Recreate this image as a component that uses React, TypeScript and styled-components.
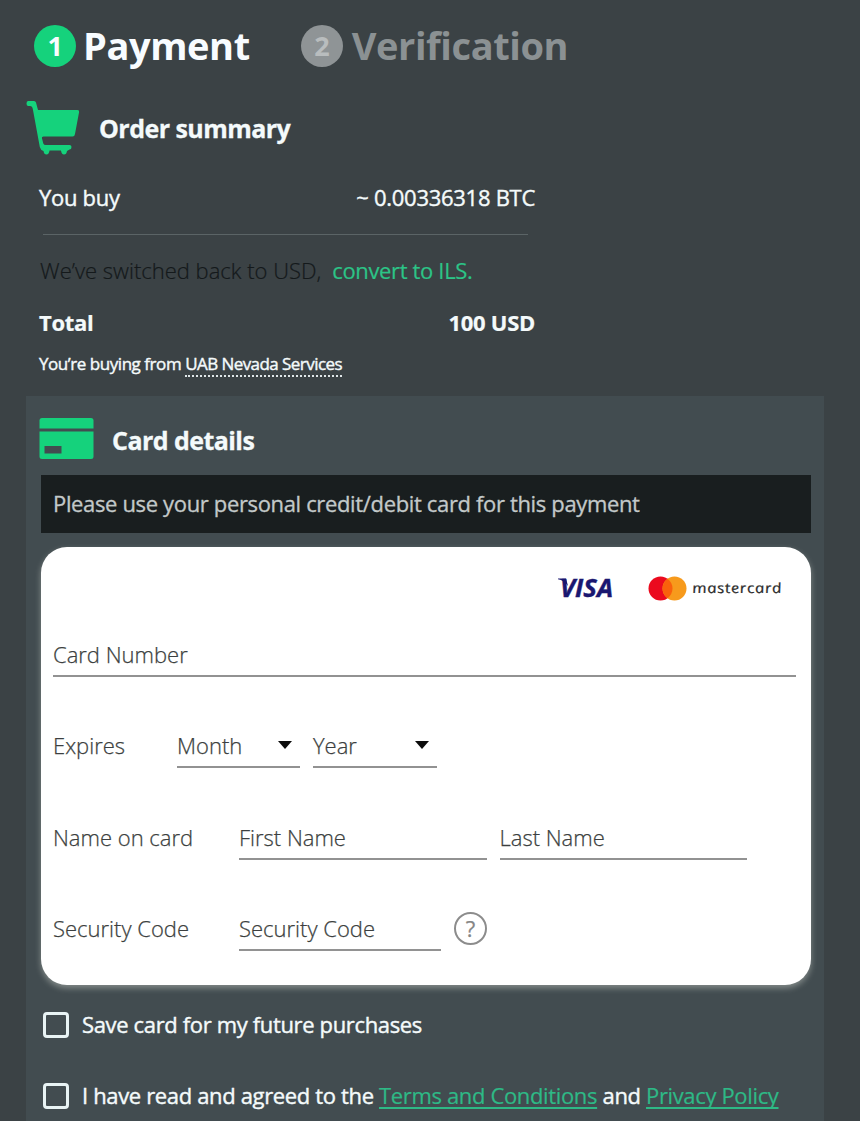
import React from "react";
import styled, { createGlobalStyle } from "styled-components";

const GlobalStyle = createGlobalStyle`
  * { box-sizing: border-box; }
  body {
    margin: 0;
    background: #3b4245;
    font-family: "Open Sans", sans-serif;
    font-size: 22px;
    line-height: 30px;
    color: #f4fafb;
    white-space: nowrap;
  }
`;

const Page = styled.main`
  width: 860px;
  height: 1121px;
  overflow: hidden;
  padding-top: 25px;
`;

const Steps = styled.nav`
  display: flex;
  gap: 51px;
  padding-left: 34px;
`;

const Step = styled.div<{ $active?: boolean }>`
  display: flex;
  align-items: center;
  gap: ${(p) => (p.$active ? 7 : 9)}px;
  height: 42px;
  font-size: 38px;
  line-height: 40px;
  font-weight: 700;
  letter-spacing: -0.42px;
  color: ${(p) => (p.$active ? "#f8fcff" : "#8b9193")};
`;

const StepTitle = styled.span`
  padding-bottom: 2px;
`;

const StepNumber = styled.span<{ $active?: boolean }>`
  display: flex;
  align-items: center;
  justify-content: center;
  flex: none;
  width: 42px;
  height: 42px;
  border-radius: 50%;
  font-size: 27px;
  background: ${(p) => (p.$active ? "#15d27c" : "#8f9496")};
  color: ${(p) => (p.$active ? "#f8fcff" : "#b9bdbe")};
`;

const Heading = styled.h2<{ $gap: number }>`
  display: flex;
  align-items: center;
  gap: ${(p) => p.$gap}px;
  margin: 0;
  font-size: 25px;
  font-weight: 700;
  letter-spacing: -0.55px;
  -webkit-text-stroke: 0.3px currentColor;
  svg { display: block; flex: none; }
`;

const Summary = styled.section`
  height: 329px;
  padding: 34px 0 0 26px;
`;

const SummaryBody = styled.div`
  width: 496px;
  margin: 27px 0 0 13px;
`;

const SummaryRow = styled.div<{ $bold?: boolean }>`
  display: flex;
  justify-content: space-between;
  height: 30px;
  letter-spacing: -0.28px;
  font-weight: ${(p) => (p.$bold ? 700 : 400)};
  -webkit-text-stroke: ${(p) => (p.$bold ? 0.2 : 0.4)}px currentColor;
`;

const Divider = styled.hr`
  width: 485px;
  height: 1px;
  margin: 22px 0 20px 4px;
  border: 0;
  background: #5b6466;
`;

const CurrencyNote = styled.p`
  margin: 0 0 22px;
  text-indent: 1px;
  font-weight: 300;
  color: #14191b;
  -webkit-text-stroke: 0.2px currentColor;
`;

const ConvertLink = styled.a`
  margin-left: 11px;
  font-weight: 400;
  letter-spacing: -0.35px;
  color: #2cc487;
`;

const Seller = styled.p`
  margin: 15px 0 0;
  font-size: 17px;
  line-height: 24px;
  letter-spacing: -0.45px;
  -webkit-text-stroke: 0.4px currentColor;
`;

const SellerName = styled.span`
  display: inline-block;
  height: 25px;
  border-bottom: 2px dotted #dfe6e8;
  letter-spacing: -0.56px;
`;

const Panel = styled.section`
  width: 798px;
  height: 725px;
  margin-left: 26px;
  padding: 22px 13px 0;
  background: #424c50;
`;

const PanelTitle = styled.span`
  padding-top: 2px;
`;

const Notice = styled.p`
  margin: 15px 0 14px 2px;
  width: 770px;
  height: 58px;
  padding-left: 12px;
  line-height: 57px;
  letter-spacing: -0.35px;
  background: #191e1f;
  color: #c3c9c9;
  -webkit-text-stroke: 0.3px currentColor;
`;

const CardForm = styled.form`
  width: 770px;
  height: 438px;
  margin-left: 1.5px;
  padding: 28px 14px 0 12.5px;
  border-radius: 26px;
  background: #fff;
  box-shadow: 0 3px 6px rgba(215, 220, 210, 0.45);
  color: #3c3f40;
  font-weight: 300;
  -webkit-text-stroke: 0.25px currentColor;
`;

const Brands = styled.div`
  display: flex;
  justify-content: flex-end;
  align-items: center;
  gap: 34px;
  height: 26px;
  margin: 0 14px 37.5px 0;
  -webkit-text-stroke: 0;
  svg { overflow: visible; }
`;

const FormRow = styled.div`
  display: flex;
  align-items: flex-start;
  height: 91.6px;
`;

const Label = styled.label<{ $width: number }>`
  width: ${(p) => p.$width}px;
`;

const Field = styled.div<{ $width: number }>`
  display: flex;
  flex: none;
  justify-content: space-between;
  width: ${(p) => p.$width}px;
  height: 38px;
  margin-right: 13px;
  padding-right: 8px;
  border-bottom: 2px solid #929292;
`;

const Arrow = styled.i`
  width: 0;
  height: 0;
  margin-top: 11px;
  border: 7px solid transparent;
  border-top: 8px solid #0c0c0c;
  border-bottom: 0;
`;

const Help = styled.button`
  width: 33px;
  height: 33px;
  margin-top: -1.5px;
  padding: 0;
  border: 2px solid #8c8c8c;
  border-radius: 50%;
  background: none;
  font: 400 22px/28px "Open Sans", sans-serif;
  color: #858585;
`;

const Consent = styled.label<{ $top: number }>`
  display: flex;
  align-items: center;
  gap: 13px;
  height: 26px;
  margin: ${(p) => p.$top}px 0 0 4px;
  letter-spacing: -0.35px;
  -webkit-text-stroke: 0.4px currentColor;
`;

const ConsentText = styled.span`
  padding-bottom: 2px;
`;

const Box = styled.span`
  width: 26px;
  height: 26px;
  border: 3px solid #e8f3f4;
  border-radius: 4px;
`;

const Legal = styled.a`
  color: #2eb986;
  text-decoration: underline;
  text-decoration-thickness: 2px;
  text-underline-offset: 3px;
  text-decoration-skip-ink: none;
  -webkit-text-stroke: 0.2px currentColor;
`;

const CartIcon = () => (
  <svg width="54" height="54" viewBox="0 0 54 54" fill="#15d27c">
    <path d="M2 0H8Q9.500 0 10 1.500L12 9H51.500Q53.500 9 53.100 11L49 33Q48.600 35.500 46.600 35.500H17.500Q15.500 35.500 15.900 37L17.300 42.500Q17.800 44 19.800 44H43.500Q45.500 44 45.500 46Q45.500 48.500 43.500 48.500L41 50Q40.500 53.500 38 53.500Q35.500 53.500 35 49.500H23.500Q23 53.500 20.500 53.500Q18 53.500 17.500 50Q14.500 49 13.800 46L6.800 8Q6.300 5 4 5H2Q0.500 4.500 0.500 2.500Q0.500 0 2 0Z" />
  </svg>
);

const CardIcon = () => (
  <svg width="55" height="42" viewBox="0 0 55 42" fill="#15d27c">
    <path d="M3 0H52Q54.500 0 54.500 2.500V10.500H.5V2.500Q.5 0 3 0Z" />
    <path fillRule="evenodd" d="M.5 13.500H54.500V38.500Q54.500 41 52 41H3Q.5 41 .5 38.500ZM5.500 28V35.500H22.500V28Z" />
  </svg>
);

const VisaLogo = () => (
  <svg width="56" height="25" viewBox="0 0 56 25" fill="#1a1770">
    <path d="M0 2.500H8L10 10Q6 4.500 0 3.300Z" />
    <text x="2" y="20.500" fontSize="24.500" fontWeight="700" fontStyle="italic" stroke="#1a1770" strokeWidth=".4" textLength="53" lengthAdjust="spacingAndGlyphs">VISA</text>
  </svg>
);

const MastercardLogo = () => (
  <svg width="135" height="25" viewBox="0 0 135 25">
    <circle cx="12.500" cy="12.500" r="12" fill="#eb0a1e" />
    <circle cx="26.500" cy="12.500" r="12" fill="#f79a1c" />
    <path d="M19.500 2.750A12 12 0 0 1 19.500 22.250A12 12 0 0 1 19.500 2.750Z" fill="#f9610c" />
    <text transform="translate(45 17) skewX(12)" fontSize="14" fontWeight="400" fontStyle="italic" letterSpacing=".5" fill="#2b2b2b" stroke="#2b2b2b" strokeWidth=".2" textLength="90" lengthAdjust="spacingAndGlyphs">mastercard</text>
  </svg>
);

export default function App() {
  return (
    <Page>
      <GlobalStyle />
      <Steps>
        <Step $active><StepNumber $active>1</StepNumber><StepTitle>Payment</StepTitle></Step>
        <Step><StepNumber>2</StepNumber><StepTitle>Verification</StepTitle></Step>
      </Steps>
      <Summary>
        <Heading $gap={19}><CartIcon />Order summary</Heading>
        <SummaryBody>
          <SummaryRow><span>You buy</span><span>~ 0.00336318 BTC</span></SummaryRow>
          <Divider />
          <CurrencyNote>We’ve switched back to USD,<ConvertLink>convert to ILS.</ConvertLink></CurrencyNote>
          <SummaryRow $bold><span>Total</span><span>100 USD</span></SummaryRow>
          <Seller>You’re buying from <SellerName>UAB Nevada Services</SellerName></Seller>
        </SummaryBody>
      </Summary>
      <Panel>
        <Heading $gap={18}><CardIcon /><PanelTitle>Card details</PanelTitle></Heading>
        <Notice>Please use your personal credit/debit card for this payment</Notice>
        <CardForm>
          <Brands><VisaLogo /><MastercardLogo /></Brands>
          <FormRow><Field $width={743}>Card Number</Field></FormRow>
          <FormRow>
            <Label $width={124}>Expires</Label>
            <Field $width={123}>Month<Arrow /></Field>
            <Field $width={124}>Year<Arrow /></Field>
          </FormRow>
          <FormRow>
            <Label $width={186}>Name on card</Label>
            <Field $width={247.5}>First Name</Field>
            <Field $width={247.5}>Last Name</Field>
          </FormRow>
          <FormRow>
            <Label $width={186}>Security Code</Label>
            <Field $width={202}>Security Code</Field>
            <Help type="button">?</Help>
          </FormRow>
        </CardForm>
        <Consent $top={27}><Box /><ConsentText>Save card for my future purchases</ConsentText></Consent>
        <Consent $top={45}>
          <Box />
          <ConsentText>I have read and agreed to the <Legal>Terms and Conditions</Legal> and <Legal>Privacy Policy</Legal></ConsentText>
        </Consent>
      </Panel>
    </Page>
  );
}
